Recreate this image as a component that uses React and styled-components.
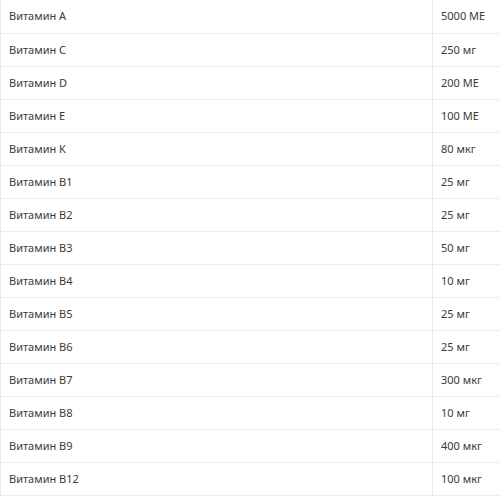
import React from 'react'
import styled, { createGlobalStyle } from 'styled-components'

const GlobalStyle = createGlobalStyle`
  body {
    margin: 0;
    background: #fff;
    font-family: "Noto Sans", "Liberation Sans", sans-serif;
  }
`

const Table = styled.table`
  width: 100%;
  border-collapse: collapse;
  border-left: 1px solid #ececec;
  font-size: 11px;
  color: #3a3a3a;
`

const Row = styled.tr`
  height: 33px;
  border-bottom: 1px solid #ececec;
`

const Cell = styled.td`
  padding: 0 8px 1px;
  vertical-align: middle;
  ${({ $value }) => $value && 'width: 51px; border-left: 1px solid #ececec;'}
`

const vitamins = [
  ['Витамин A', '5000 МЕ'],
  ['Витамин C', '250 мг'],
  ['Витамин D', '200 МЕ'],
  ['Витамин E', '100 МЕ'],
  ['Витамин K', '80 мкг'],
  ['Витамин B1', '25 мг'],
  ['Витамин B2', '25 мг'],
  ['Витамин B3', '50 мг'],
  ['Витамин B4', '10 мг'],
  ['Витамин B5', '25 мг'],
  ['Витамин B6', '25 мг'],
  ['Витамин B7', '300 мкг'],
  ['Витамин B8', '10 мг'],
  ['Витамин B9', '400 мкг'],
  ['Витамин B12', '100 мкг'],
]

export default function App() {
  return (
    <>
      <GlobalStyle />
      <Table>
        <tbody>
          {vitamins.map(([name, amount]) => (
            <Row key={name}>
              <Cell>{name}</Cell>
              <Cell $value>{amount}</Cell>
            </Row>
          ))}
        </tbody>
      </Table>
    </>
  )
}
